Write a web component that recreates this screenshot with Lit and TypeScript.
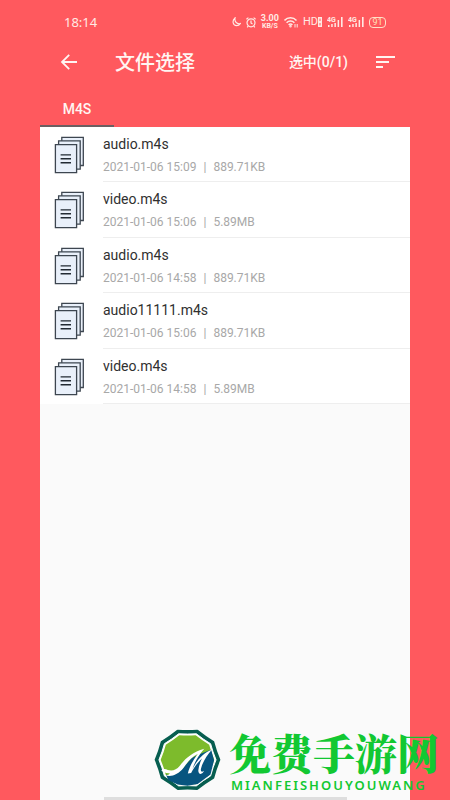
import { LitElement, html, css } from "lit";
import { customElement, property } from "lit/decorators.js";

interface FileItem {
  name: string;
  date: string;
  size: string;
}

const FILES: FileItem[] = [
  { name: "audio.m4s", date: "2021-01-06 15:09", size: "889.71KB" },
  { name: "video.m4s", date: "2021-01-06 15:06", size: "5.89MB" },
  { name: "audio.m4s", date: "2021-01-06 14:58", size: "889.71KB" },
  { name: "audio11111.m4s", date: "2021-01-06 15:06", size: "889.71KB" },
  { name: "video.m4s", date: "2021-01-06 14:58", size: "5.89MB" },
];

@customElement("status-bar")
class StatusBar extends LitElement {
  static styles = css`
    :host {
      display: flex;
      align-items: center;
      justify-content: space-between;
      height: 44px;
      padding: 0 24px;
      color: #ffe9e4;
      font: 12px/16px Roboto, sans-serif;
    }
    .time {
      font: 13px/16px "Noto Sans", sans-serif;
    }
    .icons {
      display: flex;
      align-items: center;
      gap: 5px;
    }
    .speed {
      display: flex;
      flex-direction: column;
      align-items: center;
      font: 700 9px/8px Roboto, sans-serif;
    }
    .unit {
      font-size: 7px;
      line-height: 8px;
    }
    svg {
      display: block;
    }
    .hd {
      display: flex;
      align-items: center;
      font-size: 11px;
    }
    .battery {
      box-sizing: border-box;
      height: 11px;
      width: 17px;
      border: 1px solid #ffe0c8;
      border-radius: 4px;
      font: 9px/9px Roboto, sans-serif;
      text-align: center;
      color: #ffe0b8;
    }
  `;

  private signal() {
    return html`<svg width="16" height="12" viewBox="0 0 16 12" fill="currentColor">
      <text x="0" y="6" font-size="7" font-family="Roboto" font-weight="700">4G</text>
      <rect x="1" y="9" width="1.5" height="2" />
      <rect x="4.2" y="8" width="1.5" height="3" />
      <rect x="7.4" y="7" width="1.5" height="4" />
      <rect x="10.6" y="4" width="1.5" height="7" />
      <rect x="14" y="1" width="1.6" height="10" />
    </svg>`;
  }

  render() {
    return html`
      <span class="time">18:14</span>
      <div class="icons">
        <svg width="9" height="10" viewBox="0 0 9 10" fill="none" stroke="currentColor" stroke-width="1.2">
          <path d="M3 1C-.2 3.5 .8 8.6 4.6 8.7C6.2 8.7 7.5 7.8 8.2 6.6C5.2 7.4 2.2 4.7 3 1Z" />
        </svg>
        <svg width="10" height="11" viewBox="0 0 10 11" fill="none" stroke="currentColor" stroke-width="1.2">
          <circle cx="5" cy="5.8" r="4" />
          <path d="M.4 2.2L2.4.6M9.6 2.2L7.6.6M5 3.5V6L6.5 7M2.2 9L1.2 10.4M7.8 9L8.8 10.4" />
        </svg>
        <span class="speed">3.00<span class="unit">KB/S</span></span>
        <svg width="14" height="12" viewBox="0 0 14 12" fill="none" stroke="currentColor" stroke-width="1.5">
          <path d="M.5 4.4C3.8 .9 9.2 .9 12.5 4.4M2.6 6.7C4.8 4.5 8.2 4.5 10.4 6.7M4.6 8.9C5.8 7.8 7.2 7.8 8.4 8.9" />
          <circle cx="6.5" cy="10.3" r=".5" />
          <path d="M11 8V11.5M13.2 8V11.5" stroke-width="1" />
        </svg>
        <span class="hd">HD<svg width="4" height="10" viewBox="0 0 4 10" fill="currentColor">
          <path fill-rule="evenodd" d="M0 0H4V10H0ZM1.5 1.5V4H2.5V1.5ZM1.5 6V8.5H2.5V6Z" />
        </svg></span>
        ${this.signal()} ${this.signal()}
        <span class="battery">91</span>
      </div>
    `;
  }
}

@customElement("file-row")
class FileRow extends LitElement {
  @property({ attribute: false }) file!: FileItem;

  static styles = css`
    :host {
      display: flex;
      height: 100%;
      align-items: stretch;
    }
    .icon {
      flex: none;
      width: 30px;
      height: 38px;
      margin: 9px 19px 0 14px;
    }
    .text {
      flex: 1;
      border-bottom: 1px solid #eeeeee;
      padding-top: 6px;
      font-family: Roboto, sans-serif;
    }
    .name {
      font-size: 14px;
      line-height: 22px;
      color: #303030;
    }
    .meta {
      display: flex;
      gap: 7px;
      font-size: 12px;
      line-height: 24px;
      color: #a8a8a8;
    }
  `;

  render() {
    return html`
      <svg class="icon" viewBox="0 0 30 38" fill="#e9f0fa" stroke="#3d4650" stroke-width="1.3">
        <path d="M7.8 1.4H29.3V29.5H7.8Z" />
        <path d="M4.6 4.8H26.2V33.2H4.6Z" />
        <path d="M1.4 8.6H22.6V36.6H1.4Z" />
        <path d="M6.6 18.9H17M6.6 22.8H17M6.6 26.7H17" stroke="#222a33" stroke-width="1.4" />
      </svg>
      <div class="text">
        <div class="name">${this.file.name}</div>
        <div class="meta"><span>${this.file.date}</span><span>|</span><span>${this.file.size}</span></div>
      </div>
    `;
  }
}

@customElement("site-mark")
class SiteMark extends LitElement {
  static styles = css`
    :host {
      display: flex;
      align-items: flex-start;
      gap: 8px;
      color: #12c832;
    }
    .logo {
      flex: none;
      width: 67px;
      height: 64px;
    }
    .cn {
      font: 900 42px/48px "Noto Serif CJK SC", "Noto Sans CJK SC", serif;
      white-space: nowrap;
    }
    .latin {
      font: 600 13px/16px "Noto Sans", sans-serif;
      letter-spacing: 2px;
      margin: 1px 0 0 2px;
    }
  `;

  /* Ten-sided badge outline whose sides bow slightly inwards. */
  private badge(r: number) {
    const at = (radius: number, deg: number) => {
      const a = (deg * Math.PI) / 180;
      return `${(114 + radius * Math.cos(a)).toFixed(1)} ${(115 + radius * 0.96 * Math.sin(a)).toFixed(1)}`;
    };
    let d = `M${at(r, 0)}`;
    for (let i = 0; i < 10; i++) {
      d += `Q${at(r * 0.93, i * 36 + 18)} ${at(r, i * 36 + 36)}`;
    }
    return d + "Z";
  }

  render() {
    return html`
      <svg class="logo" viewBox="12 18 204 195">
        <path d=${this.badge(96)} fill="#075e50" stroke="#075e50" stroke-width="8" stroke-linejoin="round" />
        <path d=${this.badge(87)} fill="#ffffff" stroke="#ffffff" stroke-width="3" stroke-linejoin="round" />
        <path d=${this.badge(79)} fill="#7dbb2c" stroke="#7dbb2c" stroke-width="5" stroke-linejoin="round" />
        <path
          d="M48 160C70 166 88 154 102 138L126 110L150 98L186 84L195 116L184 160L145 189L114 194L84 190L56 177Z"
          fill="#07557f"
        />
        <path
          d="M34 147C40 140 48 143 54 146C68 150 80 146 90 134C106 111 128 92 165 81C148 100 137 120 129 143C143 115 163 93 188 84C172 103 160 122 155 142C153 153 160 154 165 147C160 162 146 161 147 147C148 135 152 123 158 111C144 124 134 138 125 155L115 157C119 138 130 117 145 97C125 106 114 123 102 139C86 160 64 168 47 162C54 162 59 160 60 156C50 157 41 154 34 147Z"
          fill="#ffffff"
        />
      </svg>
      <div>
        <div class="cn">免费手游网</div>
        <div class="latin">MIANFEISHOUYOUWANG</div>
      </div>
    `;
  }
}

@customElement("app-root")
class AppRoot extends LitElement {
  static styles = css`
    :host {
      display: flex;
      flex-direction: column;
      position: relative;
      box-sizing: border-box;
      min-height: 100vh;
      padding: 0 40px;
      overflow: hidden;
      background: #ff595e;
      font-family: Roboto, "Noto Sans CJK SC", sans-serif;
    }
    header {
      display: flex;
      align-items: center;
      height: 36px;
      padding: 0 15px 0 20px;
      color: #fff5f2;
    }
    button {
      border: 0;
      padding: 0;
      background: none;
      color: inherit;
      font: inherit;
      cursor: pointer;
    }
    button svg {
      display: block;
    }
    h1 {
      flex: 1;
      margin: 0 0 0 37px;
      font: 500 20px/28px "Noto Sans CJK SC", sans-serif;
    }
    .selected {
      margin-right: 28px;
      font: 500 14px/20px Roboto, "Noto Sans CJK SC", sans-serif;
    }
    .tabs {
      display: flex;
      height: 47px;
    }
    .tab {
      box-sizing: border-box;
      width: 74px;
      border-bottom: 2px solid #6b5f62;
      padding-top: 12px;
      color: #fff5f2;
      font: 500 14px/20px Roboto, sans-serif;
    }
    main {
      flex: 1;
      background: #fafafa;
    }
    ul {
      display: grid;
      grid-auto-rows: 1fr;
      min-height: 277px;
      margin: 0;
      padding: 0;
      list-style: none;
      background: #ffffff;
    }
    .handle {
      position: absolute;
      left: 23%;
      right: 23%;
      bottom: 0;
      height: 3px;
      background: #dedede;
    }
    .mark {
      position: absolute;
      right: 11px;
      bottom: 7px;
    }
  `;

  render() {
    return html`
      <status-bar></status-bar>
      <header>
        <button aria-label="返回">
          <svg width="18" height="18" viewBox="0 0 18 18" fill="none" stroke="currentColor" stroke-width="1.8">
            <path d="M17 9H2.5M9.2 1.8L2 9L9.2 16.2" />
          </svg>
        </button>
        <h1>文件选择</h1>
        <button class="selected">选中(0/1)</button>
        <button aria-label="排序">
          <svg width="19" height="14" viewBox="0 0 19 14" fill="currentColor">
            <path d="M0 1H19V3H0ZM0 6H13V8H0ZM0 11H7V13H0Z" />
          </svg>
        </button>
      </header>
      <nav class="tabs"><button class="tab">M4S</button></nav>
      <main>
        <ul>
          ${FILES.map((file) => html`<li><file-row .file=${file}></file-row></li>`)}
        </ul>
      </main>
      <div class="handle"></div>
      <site-mark class="mark"></site-mark>
    `;
  }
}
